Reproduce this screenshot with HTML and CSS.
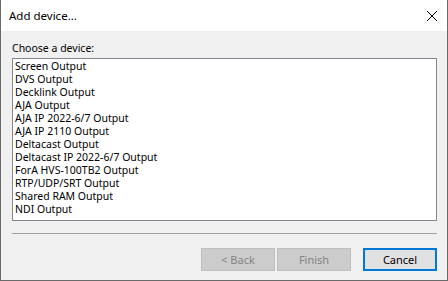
FILE: index.html
```html
<!DOCTYPE html>
<html lang="en">
<head>
    <meta charset="UTF-8">
    <title>Add device...</title>
    <link rel="stylesheet" href="styles.css">
</head>
<body>

    <!-- Add device dialog -->
    <div class="dialog">
        <div class="title-bar">
            <span class="title">Add device...</span>
            <svg class="close-icon" width="12" height="12" viewBox="0 0 12 12">
                <path d="M1 1 L11 11 M11 1 L1 11" stroke="#000" stroke-width="1" fill="none"/>
            </svg>
        </div>

        <div class="content">
            <div class="label">Choose a device:</div>
            <div class="listbox">
                <div class="item">Screen Output</div>
                <div class="item">DVS Output</div>
                <div class="item">Decklink Output</div>
                <div class="item">AJA Output</div>
                <div class="item">AJA IP 2022-6/7 Output</div>
                <div class="item">AJA IP 2110 Output</div>
                <div class="item">Deltacast Output</div>
                <div class="item">Deltacast IP 2022-6/7 Output</div>
                <div class="item">ForA HVS-100TB2 Output</div>
                <div class="item">RTP/UDP/SRT Output</div>
                <div class="item">Shared RAM Output</div>
                <div class="item">NDI Output</div>
            </div>

            <div class="separator"></div>

            <div class="buttons">
                <button class="btn" disabled>&lt; Back</button>
                <button class="btn" disabled>Finish</button>
                <button class="btn btn-default">Cancel</button>
            </div>
        </div>
    </div>

</body>
</html>
```

FILE: styles.css
```css
/* Page reset */
body {
    margin: 0;
    font-family: "Noto Sans", sans-serif;
    font-size: 10.5px;
    color: #000;
}

/* Dialog window frame */
.dialog {
    width: 448px;
    height: 281px;
    box-sizing: border-box;
    border: 1px solid #6a6a6a;
    border-top: none;
    background-color: #f0f0f0;
    display: flex;
    flex-direction: column;
}

/* Title bar */
.title-bar {
    height: 31px;
    background-color: #fff;
    display: flex;
    align-items: center;
    justify-content: space-between;
    padding: 0 8px 0 8px;
}

.title {
    font-size: 11.5px;
}

.close-icon {
    margin-right: 1px;
}

/* Main area */
.content {
    flex: 1;
    display: flex;
    flex-direction: column;
    padding: 10px 10px 0 11px;
}

.label {
    line-height: 15px;
    margin-bottom: 2px;
}

/* List of devices */
.listbox {
    height: 163px;
    box-sizing: border-box;
    border: 1px solid #828790;
    background-color: #fff;
    padding: 1px 2px;
}

.item {
    line-height: 13px;
    white-space: nowrap;
}

/* Line above the buttons */
.separator {
    height: 1px;
    background-color: #a0a0a0;
    margin-top: 12px;
}

/* Button row */
.buttons {
    display: flex;
    justify-content: flex-end;
    margin-top: 14px;
}

.btn {
    width: 74px;
    height: 23px;
    box-sizing: border-box;
    border: 1px solid #adadad;
    background-color: #e1e1e1;
    font-family: "Noto Sans", sans-serif;
    font-size: 11px;
    color: #000;
    padding: 0;
    margin-left: 2px;
}

.btn:disabled {
    background-color: #cccccc;
    border-color: #bfbfbf;
    color: #838383;
}

.btn-default {
    border: 2px solid #0078d7;
    margin-left: 12px;
}
```
